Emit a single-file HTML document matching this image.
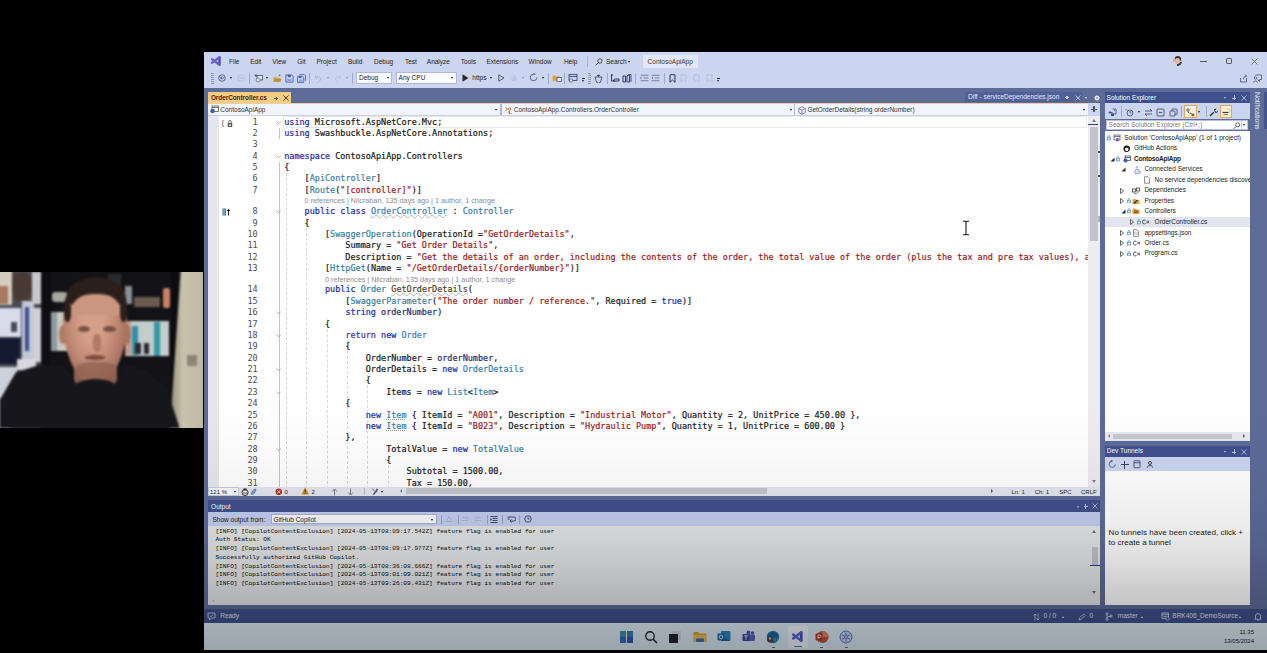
<!DOCTYPE html>
<html lang="en">
<head>
<meta charset="utf-8">
<title>OrderController.cs - ContosoApiApp - Visual Studio</title>
<style>
*{box-sizing:border-box;margin:0;padding:0}
html,body{width:1267px;height:653px;overflow:hidden;background:#000}
body{position:relative;font-family:"Liberation Sans",sans-serif;font-size:6.4px;color:#1e1e1e;line-height:1}
#vs{position:absolute;left:204px;top:52px;width:1063px;height:597.8px;background:#5d6b99;overflow:hidden}
#vs *{position:absolute;white-space:nowrap}
#vs span span,#vs pre span{position:static}
#cmd{left:0;top:0;width:1063px;height:36px;background:#ccd5f0}
.m{top:6.7px;font-size:6.5px;color:#222}
.t{font-size:6.5px;color:#222}
.car{width:0;height:0;border-left:1.7px solid transparent;border-right:1.7px solid transparent;border-top:2.2px solid #222}
.sep{width:1px;height:11px;top:20.5px;background:#9ea9cf}
.grip{width:3px;height:11px;top:20.5px;background:repeating-linear-gradient(#8d97bd 0 1px,transparent 1px 2px)}
.combo{top:20px;height:11.5px;background:#fbfcff;border:1px solid #aeb8dc}
#tab{left:4px;top:39.5px;width:83px;height:12px;background:#f5cc84}
#nav{left:4px;top:51px;width:884px;height:12.6px;background:#f3f5fc;border-top:1px solid #d4daf0;border-bottom:1px solid #c9cfe6}
#ed{left:4px;top:63.6px;width:884px;height:371px;background:#fff;overflow:hidden}
#edbar{left:4px;top:434.6px;width:892px;height:9.2px;background:#e4e6ef}
.tabt{font-size:6.4px;font-weight:bold;color:#4a1c08;letter-spacing:-0.03px}
#mg{left:0;top:0;width:11px;height:372px;background:#e6e7ec}
.ln{left:15.6px;width:34px;text-align:right;font:8.475px/11.375px "DejaVu Sans Mono","Liberation Mono",monospace;color:#4c4c4c}
#vs .cd{white-space:pre;-webkit-text-stroke:0.2px;left:76.2px;font:8.475px/11.375px "DejaVu Sans Mono","Liberation Mono",monospace;color:#1a1a1a}
.cl{font-size:7.25px;color:#8c8c8c}
.k{color:#1c2ca8}.c{color:#4a2aa8}.ty{color:#3a80a6}.tu{color:#3a80a6;text-decoration:underline wavy #b4b4b4 0.3px;text-underline-offset:-0.4px}.s{color:#9a1c1c}.mu{color:#5a4420;text-decoration:underline wavy #b4b4b4 0.3px;text-underline-offset:-0.4px}.v{color:#1f2f6f}
.gd{width:0;border-left:1px dashed #d6d6d6}
.fl{width:1px;background:#c4c4c4}
.td{color:#3a80a6;text-decoration:underline dotted #999 0.6px}
#sb{left:883.6px;top:63.6px;width:12.4px;height:371px;background:#ececf1}
#sbt{left:886.3px;top:74.5px;width:7.4px;height:114.5px;background:#c4c5cb}
.wt{font-size:6.5px;color:#e4e8f6}
.sbtx{font-size:6px;color:#222;top:436.6px}
.sep2{width:1px;height:9px;top:462.5px;background:#98a3c8}
#out{left:4px;top:473.6px;width:881px;height:79px;background:#e5e6e8}
#vs .ot{white-space:pre;font:6.15px/8.77px "Liberation Mono",monospace;color:#222;-webkit-text-stroke:0.05px}
#st{left:0;top:556.8px;width:1063px;height:14.2px;background:#40508d}
#tb{left:0;top:571px;width:1063px;height:26.8px;background:#dfeefa}
.cau{width:0;height:0;border-left:1.7px solid transparent;border-right:1.7px solid transparent;border-bottom:2.2px solid #dfe4f5}
.clk{right:13px;font-size:6px;color:#1a1f2a}
.sep3{width:1px;height:11px;top:54px;background:#9ea9cf}
.dt{font-size:8.05px;color:#222}
.nt{font-size:7px;letter-spacing:-0.05px;color:#e8ecf8;transform-origin:0 0;transform:rotate(90deg)}
#cam{position:absolute;left:0;top:272.4px;width:203px;height:155.2px;background:#121216;overflow:hidden}
#cam div{position:absolute}
#camb{left:0;top:0;width:203px;height:155.2px;filter:blur(1px)}
.mi{font:8px/11px "Liberation Sans",sans-serif;color:#555}
#shade{left:0;top:348px;width:1063px;height:250px;pointer-events:none;background:linear-gradient(rgba(0,0,0,0) 0,rgba(0,0,0,.02) 50px,rgba(0,0,0,.05) 100px,rgba(0,0,0,.08) 130px,rgba(0,0,0,.13) 160px,rgba(0,0,0,.20) 190px,rgba(0,0,0,.25) 215px,rgba(0,0,0,.31) 250px)}
.curline{width:804px;height:11.8px;border:1px solid #e9e9ec}
</style>
</head>
<body>
<div id="cam"><div id="camb">
<div style="left:-2.8px;top:-4.1px;width:44.1px;height:162.6px;background:#4a4a54;"></div>
<div style="left:-2.8px;top:-4.1px;width:15.2px;height:37.2px;background:#d4cdbf;"></div>
<div style="left:-2.8px;top:13.8px;width:11.0px;height:17.9px;background:#a87860;"></div>
<div style="left:12.4px;top:0.0px;width:19.3px;height:28.9px;background:#4a3a34;border-radius:40%"></div>
<div style="left:31.7px;top:0.0px;width:9.6px;height:31.7px;background:#c8c8cc;"></div>
<div style="left:-2.8px;top:35.8px;width:24.2px;height:28.4px;background:#d8dce8;"></div>
<div style="left:11.0px;top:49.6px;width:6.1px;height:9.6px;background:#4a4a58;"></div>
<div style="left:-2.8px;top:65.3px;width:22.6px;height:26.5px;background:#141b30;"></div>
<div style="left:-2.8px;top:94.5px;width:19.8px;height:30.9px;background:#ccd0da;"></div>
<div style="left:21.5px;top:28.9px;width:12.1px;height:63.4px;background:#c1c8d8;"></div>
<div style="left:24.8px;top:34.4px;width:3.9px;height:44.1px;background:#3a4f90;"></div>
<div style="left:33.1px;top:35.8px;width:8.3px;height:53.7px;background:#d0d0d4;"></div>
<div style="left:16.5px;top:86.8px;width:19.3px;height:11.0px;background:#d8d8dc;"></div>
<div style="left:-2.8px;top:125.4px;width:13.8px;height:33.1px;background:#9098a8;"></div>
<div style="left:41.3px;top:-4.1px;width:9.6px;height:162.6px;background:#0e0e12;"></div>
<div style="left:51.0px;top:-4.1px;width:125.4px;height:162.6px;background:#131317;"></div>
<div style="left:52.4px;top:19.3px;width:15.2px;height:10.2px;background:#a8a8a0;border-radius:30%"></div>
<div style="left:51.0px;top:40.0px;width:16.5px;height:38.6px;background:#c9c8c0;"></div>
<div style="left:51.0px;top:40.0px;width:5.5px;height:38.6px;background:#8f9aa0;"></div>
<div style="left:107.5px;top:1.4px;width:13.8px;height:16.5px;background:#2a2a30;"></div>
<div style="left:125.4px;top:13.8px;width:6.9px;height:17.9px;background:#8a9098;"></div>
<div style="left:133.6px;top:24.8px;width:26.2px;height:10.2px;background:#6a5a50;"></div>
<div style="left:162.6px;top:15.2px;width:7.7px;height:20.9px;background:#c98266;border-radius:20%"></div>
<div style="left:125.4px;top:48.8px;width:44.1px;height:35.3px;background:#c4cccc;"></div>
<div style="left:125.4px;top:48.8px;width:5.5px;height:33.9px;background:#c89888;"></div>
<div style="left:132.3px;top:53.7px;width:5.5px;height:28.9px;background:#2f8fa8;"></div>
<div style="left:154.3px;top:49.6px;width:5.5px;height:34.4px;background:#2f9aa8;"></div>
<div style="left:135.0px;top:70.3px;width:5.5px;height:11.0px;background:#2a2a30;"></div>
<div style="left:143.8px;top:70.3px;width:5.5px;height:11.0px;background:#2a2a30;"></div>
<div style="left:170.8px;top:-4.1px;width:12.4px;height:162.6px;background:#0c0c10;"></div>
<div style="left:168.6px;top:-4.1px;width:40.8px;height:162.6px;background:linear-gradient(90deg,#8f8974,#c9c2ad 35%,#bcb59f);clip-path:polygon(30% 0,100% 0,100% 100%,3% 100%)"></div>
<div style="left:187.4px;top:82.7px;width:9.6px;height:11.0px;background:#8c8478;"></div>
<div style="left:0;top:0;width:203px;height:156px;background:#16161b;clip-path:polygon(-1.4px 129.5px,15.7px 100.0px,41.3px 91.8px,65.0px 95.6px,72.2px 103.3px,82.7px 113.0px,110.2px 113.0px,118.5px 103.3px,122.3px 92.3px,146.0px 98.4px,166.4px 114.9px,179.1px 153.8px,179.1px 164.0px,-1.4px 164.0px)"></div>
<div style="left:73.8px;top:81.3px;width:43.3px;height:33.6px;background:#8f6050;border-radius:25%"></div>
<div style="left:59.0px;top:52.4px;width:8.3px;height:19.3px;background:#b07c68;border-radius:45%"></div>
<div style="left:123.4px;top:52.4px;width:7.2px;height:19.3px;background:#a87462;border-radius:45%"></div>
<div style="left:63.4px;top:15.2px;width:63.9px;height:94.2px;background:radial-gradient(ellipse at 46% 36%,#d5a08a 0 22%,#c28a74 48%,#a5705e 72%,#805246 100%);border-radius:44% 44% 46% 46%/34% 34% 66% 66%"></div>
<div style="left:65.6px;top:4.7px;width:60.6px;height:28.4px;background:#2b1f1b;border-radius:50% 50% 20% 20%/80% 80% 20% 20%"></div>
<div style="left:63.9px;top:24.8px;width:7.2px;height:24.8px;background:#2b1f1b;border-radius:40%"></div>
<div style="left:120.1px;top:24.8px;width:7.2px;height:24.8px;background:#2b1f1b;border-radius:40%"></div>
<div style="left:72.2px;top:21.8px;width:47.9px;height:20.9px;background:#ca967f;border-radius:45% 45% 0 0/70% 70% 0 0"></div>
<div style="left:78.0px;top:53.2px;width:11.6px;height:6.6px;background:#7a5246;border-radius:50%"></div>
<div style="left:102.8px;top:53.2px;width:13.0px;height:6.6px;background:#7a5246;border-radius:50%"></div>
<div style="left:93.1px;top:62.0px;width:7.7px;height:17.9px;background:#b07a66;border-radius:40%"></div>
<div style="left:85.4px;top:82.7px;width:19.3px;height:4.7px;background:#86463f;border-radius:50%"></div>
<div style="left:75.8px;top:90.1px;width:41.3px;height:17.6px;background:#8f6050;border-radius:35% 35% 50% 50%;opacity:.75"></div>
<div style="left:72.2px;top:106.6px;width:46.8px;height:24.2px;background:#16161b;border-radius:50% 50% 0 0/45% 45% 0 0"></div>
</div></div>
<div id="vs">
<div id="cmd">
<svg style="left:6.3px;top:3px" width="12.5" height="12" viewBox="0 0 25 24"><path d="M4 8.500 16 17.500M4 15.500 16 6.500" fill="none" stroke="#6f5fd0" stroke-width="4.600" stroke-linecap="round"/><path d="M19 4.500v15" stroke="#5a49c0" stroke-width="5" stroke-linecap="round"/><path d="M16 6.500 19 4.500M16 17.500l3 2" stroke="#6f5fd0" stroke-width="4" stroke-linecap="round"/></svg>
<span class="m" style="left:25.0px">File</span>
<span class="m" style="left:46.2px">Edit</span>
<span class="m" style="left:68.3px">View</span>
<span class="m" style="left:93.2px">Git</span>
<span class="m" style="left:112.5px">Project</span>
<span class="m" style="left:143.9px">Build</span>
<span class="m" style="left:170.0px">Debug</span>
<span class="m" style="left:201.0px">Test</span>
<span class="m" style="left:222.8px">Analyze</span>
<span class="m" style="left:256.8px">Tools</span>
<span class="m" style="left:282.5px">Extensions</span>
<span class="m" style="left:324.6px">Window</span>
<span class="m" style="left:359.9px">Help</span>
<i style="left:383px;top:4px;width:1px;height:11px;background:#aab3d4"></i>
<svg style="left:391px;top:5.5px" width="8" height="8" viewBox="0 0 16 16"><circle cx="10" cy="6" r="4.3" fill="none" stroke="#333" stroke-width="1.6"/><path d="M7 9 1.5 14.5" stroke="#333" stroke-width="1.8"/></svg>
<span class="m" style="left:402px">Search</span><i class="car" style="left:424px;top:9px"></i>
<div style="left:439px;top:2.7px;width:55px;height:13px;background:#e1e7f8"></div><span class="m" style="left:443.6px;color:#3a3a3a">ContosoApiApp</span>
<div style="left:968.8px;top:3.8px;width:9.6px;height:10.6px;border-radius:50%;overflow:hidden;background:#b9bcc4"><div style="left:0;top:6.5px;width:5px;height:5px;background:#d8d8da"></div><div style="left:4.5px;top:6px;width:6px;height:5px;background:#2a3248"></div><div style="left:1.8px;top:0.3px;width:6.4px;height:4.5px;border-radius:50% 50% 30% 30%;background:#2a2630"></div><div style="left:2.6px;top:2.6px;width:4.6px;height:5.4px;border-radius:45%;background:#e6b4a4"></div></div>
<i style="left:996.3px;top:9px;width:6.4px;height:0.9px;background:#555"></i>
<i style="left:1022px;top:6.3px;width:5.8px;height:5.8px;border:0.8px solid #555;border-radius:1.2px"></i>
<svg style="left:1047px;top:6px" width="7" height="7" viewBox="0 0 7 7"><path d="M0.5 0.5 6.5 6.5M6.5 0.5 0.5 6.5" stroke="#555" stroke-width="0.75"/></svg>
<svg style="left:1035px;top:22px" width="9" height="9" viewBox="0 0 18 18"><path d="M3 8v8h12V8M9 11C9 6 11 4 15 4M12 1l3 3-3 3" fill="none" stroke="#44507a" stroke-width="1.6"/></svg>
<svg style="left:1049px;top:22px" width="9" height="9" viewBox="0 0 18 18"><path d="M5 2h12v9h-4v4l-4-4" fill="none" stroke="#44507a" stroke-width="1.6"/><circle cx="5" cy="8" r="2.5" fill="none" stroke="#44507a" stroke-width="1.6"/><path d="M1 17c0-4 8-4 8 0" fill="none" stroke="#44507a" stroke-width="1.6"/></svg>
<i class="grip" style="left:7.0px"></i>
<svg style="left:13.7px;top:21.8px" width="8" height="8" viewBox="0 0 16 16"><circle cx="8" cy="8" r="6.5" fill="none" stroke="#3b4a86" stroke-width="1.6"/><path d="M12 8H5M8 5 5 8l3 3" fill="none" stroke="#3b4a86" stroke-width="1.6"/></svg>
<i class="car" style="left:26.0px;top:25px"></i>
<svg style="left:32.6px;top:21.8px" width="8" height="8" viewBox="0 0 16 16"><circle cx="8" cy="8" r="6.5" fill="none" stroke="#b3bcd9" stroke-width="1.6"/><path d="M4 8h7M8 5l3 3-3 3" fill="none" stroke="#b3bcd9" stroke-width="1.6"/></svg>
<i class="sep" style="left:45.3px"></i>
<svg style="left:50.0px;top:21px" width="10" height="10" viewBox="0 0 20 20"><rect x="6" y="5" width="11" height="9" fill="#dfe4f5" stroke="#3b4a86" stroke-width="1.6"/><path d="M4 2v6M1 5h6" stroke="#444" stroke-width="1.5"/><circle cx="8" cy="14" r="4" fill="#eef" stroke="#555" stroke-width="1.3"/></svg>
<i class="car" style="left:62.0px;top:25px"></i>
<svg style="left:68.5px;top:21.5px" width="9" height="9" viewBox="0 0 20 20"><path d="M1 17V7h6l2 2h8v8z" fill="#d9a441"/><path d="M12 5l4-3M14 2h2v2" stroke="#555" stroke-width="1.4" fill="none"/><path d="M1 17l3-6h15l-3 6z" fill="#c48d2c"/></svg>
<svg style="left:81px;top:21.5px" width="9" height="9" viewBox="0 0 20 20"><path d="M2 2h13l3 3v13H2z" fill="none" stroke="#4a63ad" stroke-width="2"/><rect x="6" y="2" width="7" height="5" fill="#3f59a8"/><rect x="5" y="11" width="10" height="7" fill="#8ea2dc"/></svg>
<svg style="left:92.5px;top:21.5px" width="9" height="9" viewBox="0 0 20 20"><path d="M5 1h11l3 3v11" fill="none" stroke="#3f59a8" stroke-width="1.8"/><path d="M1 5h11l3 3v11H1z" fill="none" stroke="#3f59a8" stroke-width="1.8"/><rect x="4" y="12" width="8" height="6" fill="#8ea2dc"/><rect x="4" y="5" width="6" height="4" fill="#3f59a8"/></svg>
<i class="sep" style="left:105.4px"></i>
<svg style="left:110.0px;top:21.5px" width="8" height="9" viewBox="0 0 16 18"><path d="M3 2v6h6M3 8c3-5 10-4 10 2 0 3-2 5-6 7" fill="none" stroke="#a9b2d2" stroke-width="1.7"/></svg>
<i class="car" style="left:122.5px;top:25px;border-top-color:#8f99bd"></i>
<svg style="left:130.0px;top:21.5px" width="8" height="9" viewBox="0 0 16 18"><path d="M13 2v6H7M13 8C10 3 3 4 3 10c0 3 2 5 6 7" fill="none" stroke="#b9c1dc" stroke-width="1.7"/></svg>
<i class="car" style="left:142.0px;top:25px;border-top-color:#8f99bd"></i>
<i class="sep" style="left:148.4px"></i>
<div class="combo" style="left:152.3px;width:36px"></div><span class="t" style="left:155.0px;top:22.5px">Debug</span><i class="car" style="left:182.5px;top:25px"></i>
<div class="combo" style="left:192.1px;width:61px"></div><span class="t" style="left:194.6px;top:22.5px">Any CPU</span><i class="car" style="left:247.3px;top:25px"></i>
<svg style="left:258.0px;top:21.8px" width="7" height="8" viewBox="0 0 7 8"><path d="M0.5 0.3 6.5 4 0.5 7.7z" fill="#2a2a2a"/></svg>
<span class="t" style="left:268.3px;top:22.5px">https</span><i class="car" style="left:286.3px;top:25px"></i>
<svg style="left:293.5px;top:21.8px" width="7" height="8" viewBox="0 0 7 8"><path d="M0.8 0.8 6 4 0.8 7.2z" fill="none" stroke="#3b4a86" stroke-width="0.9"/></svg>
<svg style="left:305.5px;top:21.3px" width="8" height="9" viewBox="0 0 16 18"><path d="M8 2c1 3 5 5 5 9a5 5 0 0 1-10 0c0-2 1-3 2-4 0 2 1 2 2 2 0-3 0-5 1-7z" fill="#bcc4df"/></svg>
<i class="car" style="left:317.5px;top:25px;border-top-color:#8f99bd"></i>
<svg style="left:325.0px;top:21.3px" width="9" height="9" viewBox="0 0 18 18"><path d="M9 2.5A6.5 6.5 0 1 0 15.5 9M9 2.5h4M9 2.5 11 0" fill="none" stroke="#3b4a86" stroke-width="1.6"/></svg>
<i class="car" style="left:337.5px;top:25px"></i>
<i class="sep" style="left:344.2px"></i>
<svg style="left:348.0px;top:21px" width="10" height="10" viewBox="0 0 20 20"><path d="M1 16V5h6l2 2h7v9z" fill="#d9a441"/><rect x="10" y="9" width="9" height="8" fill="#e8ecf8" stroke="#3b4a86" stroke-width="1.4"/></svg>
<i class="sep" style="left:360.4px"></i>
<svg style="left:364.0px;top:21px" width="10" height="10" viewBox="0 0 20 20"><rect x="2" y="3" width="16" height="12" fill="none" stroke="#3b4a86" stroke-width="1.8"/><path d="M2 7h16" stroke="#3b4a86" stroke-width="1.8"/><circle cx="6" cy="15" r="3.5" fill="#dfe4f5" stroke="#3b4a86" stroke-width="1.4"/></svg>
<i class="car" style="left:377.8px;top:28px"></i><i style="left:377.8px;top:26px;width:3.4px;height:1px;background:#222"></i>
<i class="grip" style="left:383.5px"></i>
<svg style="left:389.5px;top:21.5px" width="9" height="9" viewBox="0 0 18 18"><path d="M2 6h14l-2 7a4 4 0 0 1-10 0zM9 1v5M6 3h6" fill="none" stroke="#3d4566" stroke-width="1.7"/></svg>
<i class="sep" style="left:402.6px"></i>
<svg style="left:406.0px;top:21.5px" width="10" height="9" viewBox="0 0 20 18"><path d="M3 1v13h7M6 14h12v-4H9z" fill="none" stroke="#2f3a66" stroke-width="2"/><path d="M1 3l3-3 3 3z" fill="#2f3a66"/></svg>
<svg style="left:418.0px;top:21.5px" width="10" height="9" viewBox="0 0 20 18"><path d="M2 4v12h5V4zM10 4v12h5V2h-3z" fill="none" stroke="#2f3a66" stroke-width="2"/><path d="M13 1l5 0 0 15" fill="none" stroke="#2f3a66" stroke-width="1.6"/></svg>
<i class="sep" style="left:431.0px"></i>
<svg style="left:435.5px;top:22px" width="9" height="8" viewBox="0 0 18 16"><path d="M1 2.500h16M7 8h10M1 13.500h16" stroke="#5a6488" stroke-width="1.500"/><path d="M1 6l3 2-3 2z" fill="#4a5478"/></svg>
<svg style="left:447.0px;top:22px" width="9" height="8" viewBox="0 0 18 16"><path d="M1 2.500h16M7 8h10M1 13.500h16" stroke="#5a6488" stroke-width="1.500"/><path d="M4 6 1 8l3 2z" fill="#4a5478"/></svg>
<i class="sep" style="left:459.9px"></i>
<svg style="left:464.5px;top:21.5px" width="7" height="9" viewBox="0 0 14 18"><path d="M2 1.5h10v15l-5-4.5-5 4.5z" fill="none" stroke="#2f3552" stroke-width="2"/></svg>
<svg style="left:476.4px;top:21.5px" width="8" height="9" viewBox="0 0 16 18"><path d="M2 1.5h10v15l-5-4.5-5 4.5z" fill="none" stroke="#b4bcd9" stroke-width="1.8"/></svg>
<svg style="left:489.0px;top:21.5px" width="8" height="9" viewBox="0 0 16 18"><path d="M2 1.5h10v15l-5-4.5-5 4.5z" fill="none" stroke="#b4bcd9" stroke-width="1.8"/></svg>
<svg style="left:501.7px;top:21.5px" width="8" height="9" viewBox="0 0 16 18"><path d="M2 1.5h10v15l-5-4.5-5 4.5z" fill="none" stroke="#b4bcd9" stroke-width="1.8"/></svg>
<i class="car" style="left:513.0px;top:28px"></i><i style="left:513.0px;top:26px;width:3.4px;height:1px;background:#222"></i>
</div>
<div id="tab"></div>
<span class="tabt" style="left:6.9px;top:43.3px">OrderController.cs</span>
<i style="left:70px;top:46px;width:4px;height:1px;background:#6a4a20"></i><i style="left:71.5px;top:44.5px;width:1.5px;height:3.5px;background:#6a4a20"></i>
<svg style="left:78.5px;top:43.3px" width="6" height="6" viewBox="0 0 6 6"><path d="M0.5 0.5 5.5 5.5M5.5 0.5 0.5 5.5" stroke="#5a3a10" stroke-width="1"/></svg>
<div style="left:761px;top:39.7px;width:117px;height:10.3px;background:#4f609b"></div>
<span class="wt" style="left:764px;top:42px">Diff - serviceDependencies.json</span>
<i style="left:861px;top:45px;width:4px;height:1px;background:#c9d0ea"></i><i style="left:862.3px;top:43.5px;width:1.5px;height:3.5px;background:#c9d0ea"></i>
<svg style="left:870.5px;top:42.5px" width="6" height="6" viewBox="0 0 6 6"><path d="M0.5 0.5 5.5 5.5M5.5 0.5 0.5 5.5" stroke="#c9d0ea" stroke-width="0.9"/></svg>
<i class="car" style="left:881px;top:45px;border-top-color:#dfe4f5"></i>
<svg style="left:890px;top:42.5px" width="6" height="6" viewBox="0 0 14 14"><circle cx="7" cy="7" r="4" fill="none" stroke="#e6eaf8" stroke-width="3"/><path d="M7 0v14M0 7h14M2 2l10 10M12 2 2 12" stroke="#e6eaf8" stroke-width="1.6"/><circle cx="7" cy="7" r="1.8" fill="#5d6b99"/></svg>
<div id="nav"></div>
<i style="left:4px;top:50.6px;width:892px;height:0.8px;background:#f5cc84;opacity:.75"></i>
<svg style="left:6px;top:53px" width="9" height="9" viewBox="0 0 18 18"><rect x="4" y="2" width="13" height="11" fill="#f4f6fd" stroke="#555" stroke-width="1.6"/><path d="M4 5h13" stroke="#555" stroke-width="1.6"/><circle cx="5" cy="12" r="4.5" fill="#3d5fb5"/></svg>
<span class="t" style="left:16.3px;top:54.8px;color:#333">ContosoApiApp</span>
<i class="car" style="left:291.2px;top:57px"></i>
<i style="left:296px;top:52px;width:1.5px;height:11px;background:#aab5da"></i>
<svg style="left:300px;top:53.5px" width="9" height="9" viewBox="0 0 18 18"><path d="M3 3l4 3-4 3" fill="none" stroke="#b5541c" stroke-width="1.6"/><circle cx="11" cy="6" r="2.4" fill="none" stroke="#b5541c" stroke-width="1.5"/><path d="M11 9v6h4M11 12H7" fill="none" stroke="#b5541c" stroke-width="1.5"/></svg>
<span class="t" style="left:309.8px;top:54.8px;color:#333">ContosoApiApp.Controllers.OrderController</span>
<i class="car" style="left:585.5px;top:57px"></i>
<i style="left:589.5px;top:52px;width:1.5px;height:11px;background:#aab5da"></i>
<svg style="left:594px;top:53.5px" width="8" height="9" viewBox="0 0 16 18"><path d="M8 1.5 14.5 5v8L8 16.5 1.5 13V5zM1.5 5 8 8.5 14.5 5M8 8.5v8" fill="none" stroke="#6b4fb5" stroke-width="1.4"/></svg>
<span class="t" style="left:603.4px;top:54.8px;color:#333">GetOrderDetails(string orderNumber)</span>
<i class="car" style="left:878.5px;top:57px"></i>
<div style="left:884px;top:51px;width:12px;height:12.6px;background:#ccd5f0"></div>
<i style="left:887px;top:56.8px;width:6px;height:1.1px;background:#4a5478"></i><i style="left:889.45px;top:54.2px;width:1.1px;height:6.300px;background:#4a5478"></i>
<div id="ed">
<div id="mg"></div>
<i class="fl" style="left:70.6px;top:12.4px;height:11.4px"></i>
<i class="fl" style="left:70.6px;top:46.5px;height:327.1px"></i>
<svg class="fv" style="left:68.0px;top:5.0px" width="5.4" height="3.4" viewBox="0 0 5.4 3.4"><path d="M0.4 0.4 2.7 2.8 5 0.4" fill="none" stroke="#9a9a9a" stroke-width="0.8"/></svg>
<svg class="fv" style="left:68.0px;top:39.1px" width="5.4" height="3.4" viewBox="0 0 5.4 3.4"><path d="M0.4 0.4 2.7 2.8 5 0.4" fill="none" stroke="#9a9a9a" stroke-width="0.8"/></svg>
<svg class="fv" style="left:68.0px;top:94.6px" width="5.4" height="3.4" viewBox="0 0 5.4 3.4"><path d="M0.4 0.4 2.7 2.8 5 0.4" fill="none" stroke="#9a9a9a" stroke-width="0.8"/></svg>
<svg class="fv" style="left:68.0px;top:195.6px" width="5.4" height="3.4" viewBox="0 0 5.4 3.4"><path d="M0.4 0.4 2.7 2.8 5 0.4" fill="none" stroke="#9a9a9a" stroke-width="0.8"/></svg>
<svg class="fv" style="left:68.0px;top:218.4px" width="5.4" height="3.4" viewBox="0 0 5.4 3.4"><path d="M0.4 0.4 2.7 2.8 5 0.4" fill="none" stroke="#9a9a9a" stroke-width="0.8"/></svg>
<svg class="fv" style="left:68.0px;top:252.5px" width="5.4" height="3.4" viewBox="0 0 5.4 3.4"><path d="M0.4 0.4 2.7 2.8 5 0.4" fill="none" stroke="#9a9a9a" stroke-width="0.8"/></svg>
<svg class="fv" style="left:68.0px;top:275.2px" width="5.4" height="3.4" viewBox="0 0 5.4 3.4"><path d="M0.4 0.4 2.7 2.8 5 0.4" fill="none" stroke="#9a9a9a" stroke-width="0.8"/></svg>
<svg class="fv" style="left:68.0px;top:332.1px" width="5.4" height="3.4" viewBox="0 0 5.4 3.4"><path d="M0.4 0.4 2.7 2.8 5 0.4" fill="none" stroke="#9a9a9a" stroke-width="0.8"/></svg>
<i class="gd" style="left:98.2px;top:102.0px;height:271.6px"></i>
<i class="gd" style="left:118.6px;top:203.0px;height:170.6px"></i>
<i class="gd" style="left:139.0px;top:225.8px;height:147.9px"></i>
<i class="gd" style="left:159.4px;top:259.9px;height:113.8px"></i>
<i class="gd" style="left:179.8px;top:339.5px;height:34.1px"></i>
<i class="gd" style="left:77.8px;top:57.9px;height:315.8px"></i>
<span class="mi" style="left:13.5px;top:1.3px">(</span><svg style="left:18.5px;top:4.2px" width="6" height="7.5" viewBox="0 0 12 15"><rect x="1.5" y="6" width="9" height="8" fill="#555" /><rect x="4" y="8.500" width="4" height="3.500" fill="#ddd"/><path d="M3.500 6V3.500a2.500 2.500 0 0 1 5 0V6" fill="none" stroke="#444" stroke-width="1.500"/></svg>
<svg style="left:13.5px;top:92.4px" width="9" height="8" viewBox="0 0 18 16"><rect x="1" y="1" width="7" height="14" fill="#2f6f8f"/><path d="M2 4h5M2 8h5M2 12h5" stroke="#dfeaf0" stroke-width="1.500"/><path d="M13 15V3M10 6l3-3.500L16 6" fill="none" stroke="#222" stroke-width="2"/></svg>
<i class="curline" style="left:75.2px;top:0.7px"></i>
<span class="ln" style="top:1.0px">1</span><pre class="cd" style="top:1.0px"><span class="k">using</span> Microsoft.AspNetCore.Mvc;</pre>
<span class="ln" style="top:12.4px">2</span><pre class="cd" style="top:12.4px"><span class="k">using</span> Swashbuckle.AspNetCore.Annotations;</pre>
<span class="ln" style="top:23.8px">3</span>
<span class="ln" style="top:35.1px">4</span><pre class="cd" style="top:35.1px"><span class="k">namespace</span> ContosoApiApp.Controllers</pre>
<span class="ln" style="top:46.5px">5</span><pre class="cd" style="top:46.5px">{</pre>
<span class="ln" style="top:57.9px">6</span><pre class="cd" style="top:57.9px">    [<span class="ty">ApiController</span>]</pre>
<span class="ln" style="top:69.2px">7</span><pre class="cd" style="top:69.2px">    [<span class="ty">Route</span>(<span class="s">"[controller]"</span>)]</pre>
<span class="cl" style="left:96.6px;top:81.8px">0 references | Nilcraban, 135 days ago | 1 author, 1 change</span>
<span class="ln" style="top:90.6px">8</span><pre class="cd" style="top:90.6px">    <span class="k">public</span> <span class="k">class</span> <span class="tu">OrderController</span> : <span class="ty">Controller</span></pre>
<span class="ln" style="top:102.0px">9</span><pre class="cd" style="top:102.0px">    {</pre>
<span class="ln" style="top:113.4px">10</span><pre class="cd" style="top:113.4px">        [<span class="ty">SwaggerOperation</span>(OperationId =<span class="s">"GetOrderDetails"</span>,</pre>
<span class="ln" style="top:124.8px">11</span><pre class="cd" style="top:124.8px">            Summary = <span class="s">"Get Order Details"</span>,</pre>
<span class="ln" style="top:136.1px">12</span><pre class="cd" style="top:136.1px">            Description = <span class="s">"Get the details of an order, including the contents of the order, the total value of the order (plus the tax and pre tax values), and the status of the order."</span></pre>
<span class="ln" style="top:147.5px">13</span><pre class="cd" style="top:147.5px">        [<span class="ty">HttpGet</span>(Name = <span class="s">"/GetOrderDetails/{orderNumber}"</span>)]</pre>
<span class="cl" style="left:117.0px;top:160.1px">0 references | Nilcraban, 135 days ago | 1 author, 1 change</span>
<span class="ln" style="top:168.9px">14</span><pre class="cd" style="top:168.9px">        <span class="k">public</span> <span class="ty">Order</span> <span class="mu">GetOrderDetails</span>(</pre>
<span class="ln" style="top:180.2px">15</span><pre class="cd" style="top:180.2px">            [<span class="ty">SwaggerParameter</span>(<span class="s">"The order number / reference."</span>, Required = <span class="k">true</span>)]</pre>
<span class="ln" style="top:191.6px">16</span><pre class="cd" style="top:191.6px">            <span class="k">string</span> <span class="v">orderNumber</span>)</pre>
<span class="ln" style="top:203.0px">17</span><pre class="cd" style="top:203.0px">        {</pre>
<span class="ln" style="top:214.4px">18</span><pre class="cd" style="top:214.4px">            <span class="c">return</span> <span class="k">new</span> <span class="ty">Order</span></pre>
<span class="ln" style="top:225.8px">19</span><pre class="cd" style="top:225.8px">            {</pre>
<span class="ln" style="top:237.1px">20</span><pre class="cd" style="top:237.1px">                OrderNumber = <span class="v">orderNumber</span>,</pre>
<span class="ln" style="top:248.5px">21</span><pre class="cd" style="top:248.5px">                OrderDetails = <span class="k">new</span> <span class="ty">OrderDetails</span></pre>
<span class="ln" style="top:259.9px">22</span><pre class="cd" style="top:259.9px">                {</pre>
<span class="ln" style="top:271.2px">23</span><pre class="cd" style="top:271.2px">                    Items = <span class="k">new</span> <span class="ty">List</span>&lt;<span class="ty">Item</span>&gt;</pre>
<span class="ln" style="top:282.6px">24</span><pre class="cd" style="top:282.6px">            {</pre>
<span class="ln" style="top:294.0px">25</span><pre class="cd" style="top:294.0px">                <span class="k">new</span> <span class="td">Item</span> { ItemId = <span class="s">"A001"</span>, Description = <span class="s">"Industrial Motor"</span>, Quantity = 2, UnitPrice = 450.00 },</pre>
<span class="ln" style="top:305.4px">26</span><pre class="cd" style="top:305.4px">                <span class="k">new</span> <span class="td">Item</span> { ItemId = <span class="s">"B023"</span>, Description = <span class="s">"Hydraulic Pump"</span>, Quantity = 1, UnitPrice = 600.00 }</pre>
<span class="ln" style="top:316.8px">27</span><pre class="cd" style="top:316.8px">            },</pre>
<span class="ln" style="top:328.1px">28</span><pre class="cd" style="top:328.1px">                    TotalValue = <span class="k">new</span> <span class="ty">TotalValue</span></pre>
<span class="ln" style="top:339.5px">29</span><pre class="cd" style="top:339.5px">                    {</pre>
<span class="ln" style="top:350.9px">30</span><pre class="cd" style="top:350.9px">                        Subtotal = 1500.00,</pre>
<span class="ln" style="top:362.2px">31</span><pre class="cd" style="top:362.2px">                        Tax = 150.00,</pre>
<!--EDX-->
</div>
<div id="sb"></div><div id="sbt"></div>
<i style="left:887.5px;top:67px;width:0;height:0;border-left:2.5px solid transparent;border-right:2.5px solid transparent;border-bottom:3px solid #7d8088"></i>
<i style="left:887.5px;top:427.5px;width:0;height:0;border-left:2.5px solid transparent;border-right:2.5px solid transparent;border-top:3px solid #7d8088"></i>
<i style="left:884px;top:72.2px;width:10px;height:1px;background:#2a3a9a"></i>
<i style="left:894px;top:99.3px;width:2px;height:2px;background:#2f5f6f"></i><i style="left:894px;top:123px;width:2px;height:2px;background:#2f5f6f"></i><i style="left:894px;top:164px;width:2px;height:6px;background:#b4b6be"></i>
<div id="edbar"></div>
<div style="left:4px;top:434.6px;width:30.5px;height:9.2px;background:#f8f9fd;border:1px solid #c5cbe3"></div>
<span class="sbtx" style="left:6px">121 %</span><i class="car" style="left:29.6px;top:438.6px"></i>
<svg style="left:36.5px;top:435.5px" width="8" height="8" viewBox="0 0 16 16"><circle cx="8" cy="9" r="6" fill="#fff" stroke="#2a2a2a" stroke-width="2"/><rect x="5" y="1" width="6" height="4" fill="#2a2a2a"/><path d="M4 10h8" stroke="#2a2a2a" stroke-width="1.6"/></svg>
<svg style="left:46px;top:435.5px" width="8" height="8" viewBox="0 0 16 16"><path d="M3 13c0-6 3-10 9-11-1 6-3 10-9 11z" fill="#7f9fdc" stroke="#3b5cb0" stroke-width="1.2"/></svg>
<svg style="left:70.5px;top:435.6px" width="7.6" height="7.6" viewBox="0 0 16 16"><circle cx="8" cy="8" r="7" fill="#c2301c"/><path d="M5 5l6 6M11 5l-6 6" stroke="#fff" stroke-width="1.8"/></svg>
<span class="sbtx" style="left:80.5px">0</span>
<svg style="left:96.5px;top:435.3px" width="8.4" height="7.8" viewBox="0 0 16 15"><path d="M8 0.5 15.5 14.5H0.5z" fill="#d08a1c"/><path d="M8 5v5M8 11.3v1.6" stroke="#2a1a00" stroke-width="1.7"/></svg>
<span class="sbtx" style="left:107.5px">2</span>
<svg style="left:127px;top:435.5px" width="7" height="8" viewBox="0 0 14 16"><path d="M7 15V2M2 7l5-5 5 5" fill="none" stroke="#555d7a" stroke-width="1.5"/></svg>
<svg style="left:143px;top:435.5px" width="7" height="8" viewBox="0 0 14 16"><path d="M7 1v13M2 9l5 5 5-5" fill="none" stroke="#555d7a" stroke-width="1.5"/></svg>
<i style="left:159.5px;top:435.5px;width:1px;height:7.5px;background:#b4bad2"></i>
<svg style="left:166.5px;top:435.3px" width="9" height="8.4" viewBox="0 0 18 17"><path d="M3 15 11 5l3 2-8 9zM12 2l1 2 2 1-2 1-1 2-1-2-2-1 2-1z" fill="#555d7a"/><path d="M2 3l6 6" stroke="#3b4566" stroke-width="1.5"/></svg>
<i class="car" style="left:176.5px;top:438.6px"></i>
<i style="left:195.5px;top:436.8px;width:0;height:0;border-top:2.3px solid transparent;border-bottom:2.3px solid transparent;border-right:2.8px solid #7d8088"></i>
<div style="left:202px;top:436.2px;width:361px;height:5.6px;background:#c3c6d0"></div>
<i style="left:787px;top:436.8px;width:0;height:0;border-top:2.3px solid transparent;border-bottom:2.3px solid transparent;border-left:2.8px solid #555"></i>
<span class="sbtx" style="left:807.5px">Ln: 1</span>
<span class="sbtx" style="left:830.7px">Ch: 1</span>
<span class="sbtx" style="left:855.3px">SPC</span>
<span class="sbtx" style="left:877px">CRLF</span>
<svg style="left:757.5px;top:168px" width="8" height="16" viewBox="0 0 8 16"><path d="M1 1.200h2.200L4 2l.8-.8H7M1 14.800h2.200L4 14l.8.800H7M4 2v12" fill="none" stroke="#fff" stroke-width="2.200"/><path d="M1 1.200h2.200L4 2l.8-.8H7M1 14.800h2.200L4 14l.8.800H7M4 2v12" fill="none" stroke="#1a1a1a" stroke-width="1.100"/></svg>
<div style="left:4px;top:448.4px;width:892px;height:11.2px;background:#40508d"></div>
<span class="wt" style="left:7.1px;top:451.6px;color:#fff">Output</span>
<i class="car" style="left:872.5px;top:453.5px;border-top-color:#b9c3e5"></i>
<i style="left:880px;top:454.3px;width:4px;height:0.8px;background:#b4bfe2"></i><i style="left:881.3px;top:451.5px;width:1.2px;height:5px;background:#b4bfe2"></i>
<svg style="left:887.5px;top:451.3px" width="6" height="6" viewBox="0 0 6 6"><path d="M0.5 0.5 5.5 5.5M5.5 0.5 0.5 5.5" stroke="#cdd5ef" stroke-width="0.75"/></svg>
<div style="left:4px;top:459.6px;width:892px;height:14px;background:#c3cdef"></div>
<span class="t" style="left:8.5px;top:464.5px">Show output from:</span>
<div style="left:66.8px;top:462.3px;width:166.5px;height:10px;background:#fbfcff;border:1px solid #aab3d0"></div>
<span class="t" style="left:69.6px;top:464.5px">GitHub Copilot</span>
<i class="car" style="left:227.2px;top:466.5px"></i>
<i class="sep2" style="left:237.3px"></i>
<svg style="left:241px;top:463px" width="8" height="8" viewBox="0 0 16 16"><path d="M2 13h12M4 10l4-7 4 7" fill="none" stroke="#a3acc9" stroke-width="1.5"/></svg>
<i class="sep2" style="left:253.5px"></i>
<svg style="left:257px;top:463px" width="8" height="8" viewBox="0 0 16 16"><path d="M2 5h9M2 11h12M11 2l3 3-3 3" fill="none" stroke="#a3acc9" stroke-width="1.5"/></svg>
<svg style="left:269.5px;top:463px" width="8" height="8" viewBox="0 0 16 16"><path d="M5 5h9M2 11h12M5 2 2 5l3 3" fill="none" stroke="#a3acc9" stroke-width="1.5"/></svg>
<i class="sep2" style="left:282.7px"></i>
<svg style="left:286px;top:463px" width="8" height="8" viewBox="0 0 16 16"><path d="M1 3h14M5 7h10M5 11h10M1 15h14" stroke="#2f3552" stroke-width="1.7"/><path d="M1 6l3 3-3 3z" fill="#2f3552"/></svg>
<i class="sep2" style="left:298.4px"></i>
<svg style="left:302.5px;top:463px" width="9" height="8" viewBox="0 0 18 16"><path d="M1 4h13a3 3 0 0 1 0 8H6M9 9l-3 3 3 3M1 8h5" fill="none" stroke="#2f3552" stroke-width="1.7"/></svg>
<i class="sep2" style="left:315.4px"></i>
<svg style="left:320px;top:463px" width="8" height="8" viewBox="0 0 16 16"><circle cx="8" cy="8" r="6.5" fill="none" stroke="#2f3552" stroke-width="1.6"/><path d="M8 4v4h3" fill="none" stroke="#2f3552" stroke-width="1.5"/></svg>
<div id="out"></div>
<pre class="ot" style="left:11.4px;top:475.6px">[INFO] [CopilotContentExclusion] [2024-05-13T08:09:17.542Z] feature flag is enabled for user
Auth Status: OK
[INFO] [CopilotContentExclusion] [2024-05-13T08:09:17.977Z] feature flag is enabled for user
Successfully authorized GitHub Copilot.
[INFO] [CopilotContentExclusion] [2024-05-13T08:36:08.666Z] feature flag is enabled for user
[INFO] [CopilotContentExclusion] [2024-05-13T09:01:09.021Z] feature flag is enabled for user
[INFO] [CopilotContentExclusion] [2024-05-13T09:26:09.431Z] feature flag is enabled for user</pre>
<div style="left:885px;top:473.6px;width:11px;height:79px;background:#e5e6e8"></div>
<i style="left:888px;top:477.5px;width:0;height:0;border-left:2.5px solid transparent;border-right:2.5px solid transparent;border-bottom:3px solid #6d7078"></i>
<i style="left:888px;top:538.5px;width:0;height:0;border-left:2.5px solid transparent;border-bottom:none;border-right:2.5px solid transparent;border-top:3px solid #6d7078"></i>
<div style="left:887.5px;top:494.5px;width:6px;height:18px;background:#bfc1c9"></div>
<i style="left:885.5px;top:512.8px;width:10px;height:1px;background:#2a3a9a"></i>
<i style="left:8px;top:548px;width:0;height:0;border-top:1.6px solid transparent;border-bottom:1.6px solid transparent;border-right:2px solid #aaa"></i>
<div style="left:901.0px;top:39.8px;width:145px;height:11.6px;background:#40508d"></div>
<span class="wt" style="left:902.6px;top:42.9px;color:#fff">Solution Explorer</span>
<i class="car" style="left:1019.7px;top:45.2px;border-top-color:#b9c3e5"></i>
<i style="left:1028.4px;top:46.3px;width:4px;height:0.8px;background:#b4bfe2"></i><i style="left:1029.7px;top:43.3px;width:1.2px;height:5px;background:#b4bfe2"></i>
<svg style="left:1036.8px;top:43.2px" width="6" height="6" viewBox="0 0 6 6"><path d="M0.5 0.5 5.5 5.5M5.5 0.5 0.5 5.5" stroke="#cdd5ef" stroke-width="0.75"/></svg>
<div style="left:901.0px;top:51.4px;width:145px;height:16px;background:#ccd5f0"></div>
<svg style="left:903.5px;top:55.7px" width="9" height="9" viewBox="0 0 18 18"><path d="M9 2h7v10H9M12 5h2" fill="none" stroke="#3b4a86" stroke-width="1.6"/><path d="M9 9H2M5 6 2 9l3 3" fill="none" stroke="#3b4a86" stroke-width="1.8"/><rect x="6" y="11" width="6" height="5" fill="#3b4a86"/></svg>
<i class="sep3" style="left:917.0px"></i>
<svg style="left:921.0px;top:55.7px" width="9" height="9" viewBox="0 0 18 18"><circle cx="10" cy="10" r="6" fill="none" stroke="#3d4566" stroke-width="1.6"/><path d="M10 6v4h3M1 2l3 3" fill="none" stroke="#3d4566" stroke-width="1.5"/></svg>
<i class="car" style="left:934.0px;top:59.3px"></i>
<svg style="left:939.5px;top:55.7px" width="9" height="9" viewBox="0 0 18 18"><path d="M2 6h14M12 2l4 4M16 12H2M6 16l-4-4" fill="none" stroke="#3d4566" stroke-width="1.6"/></svg>
<svg style="left:952.3px;top:55.7px" width="9" height="9" viewBox="0 0 18 18"><rect x="2" y="2" width="14" height="14" rx="1.5" fill="none" stroke="#3d4566" stroke-width="1.7"/><path d="M5.5 9h7" stroke="#3d4566" stroke-width="1.7"/></svg>
<svg style="left:964.5px;top:55.7px" width="9" height="9" viewBox="0 0 18 18"><rect x="6" y="2" width="10" height="11" rx="1" fill="none" stroke="#3d4566" stroke-width="1.6"/><rect x="2" y="6" width="10" height="10" rx="1" fill="#ccd5f0" stroke="#3d4566" stroke-width="1.6"/></svg>
<i class="sep3" style="left:976.6px"></i>
<div style="left:980.3px;top:53.2px;width:12.7px;height:12.7px;background:#fbeedb;border:0.8px solid #e2a862"></div>
<svg style="left:982.2px;top:55.7px" width="9" height="9" viewBox="0 0 18 18"><circle cx="4" cy="4" r="2.3" fill="none" stroke="#3d3d3d" stroke-width="1.5"/><circle cx="14" cy="14" r="2.3" fill="#c8841c" stroke="#3d3d3d" stroke-width="1.2"/><path d="M4 6.500c0 6 6 2 8 6" fill="none" stroke="#3d3d3d" stroke-width="1.5"/></svg>
<i class="car" style="left:994.3px;top:59.3px"></i>
<i class="sep3" style="left:1002.0px"></i>
<svg style="left:1004.5px;top:55.7px" width="9" height="9" viewBox="0 0 18 18"><path d="M2 16 9.500 8.500" stroke="#2a2a2a" stroke-width="2.600"/><path d="M10 3a4 4 0 0 1 5-1l-3 3 1 2 2 1 3-3a4 4 0 0 1-6 4z" fill="#2a2a2a"/></svg>
<div style="left:1015.7px;top:53.2px;width:12.3px;height:12.7px;background:#fbeedb;border:0.8px solid #e2a862"></div>
<svg style="left:1017.5px;top:55.7px" width="9" height="9" viewBox="0 0 18 18"><path d="M1 9h12" stroke="#3d3d3d" stroke-width="2.400"/><path d="M3 13h9" stroke="#c8841c" stroke-width="2"/><path d="M13 4l2-2M15 6h2M12 3V1" stroke="#c8841c" stroke-width="1.3"/></svg>
<div style="left:902.4px;top:68.0px;width:141.8px;height:10.3px;background:#fff;border:1px solid #b9c1dc"></div>
<span class="t" style="left:904.6px;top:70.2px;color:#7a7a7a">Search Solution Explorer (Ctrl+;)</span>
<svg style="left:1029.0px;top:69.5px" width="7.5" height="7.5" viewBox="0 0 16 16"><circle cx="10" cy="6" r="4.300" fill="none" stroke="#333" stroke-width="1.600"/><path d="M7 9 1.500 14.500" stroke="#333" stroke-width="1.800"/></svg>
<i style="left:1036.8px;top:69.0px;width:1px;height:8.3px;background:#c9cfe6"></i><i class="car" style="left:1038.6px;top:72.3px"></i>
<div style="left:901.0px;top:78.6px;width:145px;height:301.2px;background:#fff;overflow:hidden" id="tree">
<div style="left:0;top:86.4px;width:145px;height:10.500px;background:#e3e5ee"></div>
<svg style="left:2.3px;top:4.6px" width="4" height="5.400" viewBox="0 0 9 12"><rect x="1" y="5" width="7" height="6" fill="#e4eef6" stroke="#4d8fb8" stroke-width="1.600"/><path d="M2.500 5V3a2 2 0 0 1 4 0v2" fill="none" stroke="#4d8fb8" stroke-width="1.400"/></svg>
<svg style="left:7.9px;top:3.6px" width="8" height="8" viewBox="0 0 16 16"><rect x="2" y="2" width="12" height="10" fill="#f4f6fd" stroke="#555" stroke-width="1.500"/><path d="M2 5h12" stroke="#555" stroke-width="1.500"/><path d="M6 9l5-1v7l-5-1z" fill="#7b4fc0"/></svg>
<span class="t" style="left:19.2px;top:4.4px">Solution 'ContosoApiApp' (1 of 1 project)</span>
<svg style="left:17.5px;top:14.4px" width="7.5" height="7.5" viewBox="0 0 16 16"><circle cx="8" cy="8" r="7" fill="#1e1e1e"/><path d="M5.500 13c0-3-2-3-1-5.500 0-2 7-2 7 0 1 2.500-1 2.500-1 5.500z" fill="#fff"/></svg>
<span class="t" style="left:29.0px;top:14.9px">GitHub Actions</span>
<svg style="left:4.6px;top:26.1px" width="5" height="5" viewBox="0 0 10 10"><path d="M9 1v8H1z" fill="#2a2a2a"/></svg>
<svg style="left:11.3px;top:25.6px" width="4" height="5.400" viewBox="0 0 9 12"><rect x="1" y="5" width="7" height="6" fill="#e4eef6" stroke="#4d8fb8" stroke-width="1.600"/><path d="M2.500 5V3a2 2 0 0 1 4 0v2" fill="none" stroke="#4d8fb8" stroke-width="1.400"/></svg>
<svg style="left:17.6px;top:24.6px" width="8" height="8" viewBox="0 0 16 16"><rect x="4" y="2" width="11" height="9" fill="#f4f6fd" stroke="#444" stroke-width="1.500"/><path d="M4 5h11" stroke="#444" stroke-width="1.500"/><circle cx="5" cy="11" r="4.200" fill="#3d5fb5"/></svg>
<span class="t" style="left:29.0px;top:25.4px;font-weight:bold;letter-spacing:-0.2px">ContosoApiApp</span>
<svg style="left:15.5px;top:36.5px" width="5" height="5" viewBox="0 0 10 10"><path d="M9 1v8H1z" fill="#2a2a2a"/></svg>
<svg style="left:27.7px;top:35.0px" width="8" height="8" viewBox="0 0 16 16"><path d="M4 10.500a3.500 3.500 0 1 1 8 0h1a2 2 0 0 1 0 4H4a2.500 2.500 0 0 1 0-4z" fill="#e8eefb" stroke="#4a78c8" stroke-width="1.400"/><path d="M8 5V1M6 3l2-2 2 2" fill="none" stroke="#4a78c8" stroke-width="1.300"/></svg>
<span class="t" style="left:39.4px;top:35.8px">Connected Services</span>
<svg style="left:37.6px;top:45.5px" width="8" height="8" viewBox="0 0 16 16"><path d="M3 1.500h7l3 3v10H3z" fill="#fff" stroke="#555" stroke-width="1.300"/></svg>
<span class="t" style="left:49.6px;top:46.3px">No service dependencies discovered</span>
<svg style="left:15.0px;top:57.0px" width="4" height="6" viewBox="0 0 8 12"><path d="M1 1l6 5-6 5z" fill="#fff" stroke="#2a2a2a" stroke-width="1.400"/></svg>
<svg style="left:27.0px;top:56.0px" width="8" height="8" viewBox="0 0 16 16"><rect x="1" y="4" width="6" height="6" fill="none" stroke="#333" stroke-width="1.500"/><rect x="9" y="2" width="6" height="6" fill="none" stroke="#333" stroke-width="1.500"/><path d="M4 12c3 3 7 1 8-2" fill="none" stroke="#333" stroke-width="1.300"/></svg>
<span class="t" style="left:39.4px;top:56.8px">Dependencies</span>
<svg style="left:15.0px;top:67.5px" width="4" height="6" viewBox="0 0 8 12"><path d="M1 1l6 5-6 5z" fill="#fff" stroke="#2a2a2a" stroke-width="1.400"/></svg>
<svg style="left:22.0px;top:67.5px" width="4" height="5.400" viewBox="0 0 9 12"><rect x="1" y="5" width="7" height="6" fill="#e4eef6" stroke="#4d8fb8" stroke-width="1.600"/><path d="M2.500 5V3a2 2 0 0 1 4 0v2" fill="none" stroke="#4d8fb8" stroke-width="1.400"/></svg>
<svg style="left:27.2px;top:66.5px" width="8" height="8" viewBox="0 0 16 16"><path d="M1 4h6l1 2h7v8H1z" fill="#d8a83c"/><path d="M3 12l7-7 2 2-7 7z" fill="#333"/></svg>
<span class="t" style="left:39.4px;top:67.3px">Properties</span>
<svg style="left:15.5px;top:78.4px" width="5" height="5" viewBox="0 0 10 10"><path d="M9 1v8H1z" fill="#2a2a2a"/></svg>
<svg style="left:22.0px;top:77.9px" width="4" height="5.400" viewBox="0 0 9 12"><rect x="1" y="5" width="7" height="6" fill="#e4eef6" stroke="#4d8fb8" stroke-width="1.600"/><path d="M2.500 5V3a2 2 0 0 1 4 0v2" fill="none" stroke="#4d8fb8" stroke-width="1.400"/></svg>
<svg style="left:27.2px;top:76.9px" width="8" height="8" viewBox="0 0 16 16"><path d="M1 3h6l1 2h7v9H1z" fill="#d8a83c"/><rect x="4" y="7" width="8" height="5" fill="#b5541c"/></svg>
<span class="t" style="left:39.4px;top:77.7px">Controllers</span>
<svg style="left:24.9px;top:88.7px" width="4" height="6" viewBox="0 0 8 12"><path d="M1 1l6 5-6 5z" fill="#fff" stroke="#2a2a2a" stroke-width="1.400"/></svg>
<svg style="left:31.7px;top:88.7px" width="4" height="5.400" viewBox="0 0 9 12"><rect x="1" y="5" width="7" height="6" fill="#e4eef6" stroke="#4d8fb8" stroke-width="1.600"/><path d="M2.500 5V3a2 2 0 0 1 4 0v2" fill="none" stroke="#4d8fb8" stroke-width="1.400"/></svg>
<svg style="left:37.3px;top:87.7px" width="8" height="8" viewBox="0 0 16 16"><path d="M7 5a4 4 0 1 0 0 6" fill="none" stroke="#444" stroke-width="1.800"/><path d="M10 5v6M13 5v6M9 7h5M9 9h5" stroke="#444" stroke-width="1"/></svg>
<span class="t" style="left:49.6px;top:88.5px">OrderController.cs</span>
<svg style="left:15.0px;top:99.2px" width="4" height="6" viewBox="0 0 8 12"><path d="M1 1l6 5-6 5z" fill="#fff" stroke="#2a2a2a" stroke-width="1.400"/></svg>
<svg style="left:22.0px;top:99.2px" width="4" height="5.400" viewBox="0 0 9 12"><rect x="1" y="5" width="7" height="6" fill="#e4eef6" stroke="#4d8fb8" stroke-width="1.600"/><path d="M2.500 5V3a2 2 0 0 1 4 0v2" fill="none" stroke="#4d8fb8" stroke-width="1.400"/></svg>
<svg style="left:27.2px;top:98.2px" width="8" height="8" viewBox="0 0 16 16"><path d="M3 1.500h7l3 3v10H3z" fill="#fff" stroke="#555" stroke-width="1.300"/><path d="M7 6c-1.500 0-1 2-2 2.500 1 .5.500 2.500 2 2.500M9 6c1.500 0 1 2 2 2.500-1 .5-.5 2.500-2 2.500" fill="none" stroke="#333" stroke-width="1"/></svg>
<span class="t" style="left:39.4px;top:99.0px">appsettings.json</span>
<svg style="left:15.0px;top:109.7px" width="4" height="6" viewBox="0 0 8 12"><path d="M1 1l6 5-6 5z" fill="#fff" stroke="#2a2a2a" stroke-width="1.400"/></svg>
<svg style="left:22.0px;top:109.7px" width="4" height="5.400" viewBox="0 0 9 12"><rect x="1" y="5" width="7" height="6" fill="#e4eef6" stroke="#4d8fb8" stroke-width="1.600"/><path d="M2.500 5V3a2 2 0 0 1 4 0v2" fill="none" stroke="#4d8fb8" stroke-width="1.400"/></svg>
<svg style="left:27.5px;top:108.7px" width="8" height="8" viewBox="0 0 16 16"><path d="M7 5a4 4 0 1 0 0 6" fill="none" stroke="#444" stroke-width="1.800"/><path d="M10 5v6M13 5v6M9 7h5M9 9h5" stroke="#444" stroke-width="1"/></svg>
<span class="t" style="left:39.4px;top:109.5px">Order.cs</span>
<svg style="left:15.0px;top:120.1px" width="4" height="6" viewBox="0 0 8 12"><path d="M1 1l6 5-6 5z" fill="#fff" stroke="#2a2a2a" stroke-width="1.400"/></svg>
<svg style="left:22.0px;top:120.1px" width="4" height="5.400" viewBox="0 0 9 12"><rect x="1" y="5" width="7" height="6" fill="#e4eef6" stroke="#4d8fb8" stroke-width="1.600"/><path d="M2.500 5V3a2 2 0 0 1 4 0v2" fill="none" stroke="#4d8fb8" stroke-width="1.400"/></svg>
<svg style="left:27.5px;top:119.1px" width="8" height="8" viewBox="0 0 16 16"><path d="M7 5a4 4 0 1 0 0 6" fill="none" stroke="#444" stroke-width="1.800"/><path d="M10 5v6M13 5v6M9 7h5M9 9h5" stroke="#444" stroke-width="1"/></svg>
<span class="t" style="left:39.4px;top:119.9px">Program.cs</span>
</div>
<div style="left:901.0px;top:379.8px;width:145px;height:9px;background:#e8e9ef"></div>
<div style="left:909.0px;top:381.6px;width:119px;height:5.4px;background:#c6c8d0"></div>
<i style="left:904.0px;top:382.0px;width:0;height:0;border-top:2.300px solid transparent;border-bottom:2.300px solid transparent;border-right:2.800px solid #7d8088"></i>
<i style="left:1039.0px;top:382.0px;width:0;height:0;border-top:2.300px solid transparent;border-bottom:2.300px solid transparent;border-left:2.800px solid #555"></i>
<div style="left:901.0px;top:393.6px;width:145px;height:11.2px;background:#40508d"></div>
<span class="wt" style="left:902.8px;top:396.2px;color:#fff">Dev Tunnels</span>
<i class="car" style="left:1019.7px;top:399.0px;border-top-color:#b9c3e5"></i>
<i style="left:1028.4px;top:400.0px;width:4px;height:0.8px;background:#b4bfe2"></i><i style="left:1029.7px;top:397.0px;width:1.2px;height:5px;background:#b4bfe2"></i>
<svg style="left:1036.8px;top:397.0px" width="6" height="6" viewBox="0 0 6 6"><path d="M0.500 0.500 5.500 5.500M5.500 0.500 0.500 5.500" stroke="#cdd5ef" stroke-width="0.75"/></svg>
<div style="left:901.0px;top:405.0px;width:145px;height:14px;background:#ccd5f0"></div>
<svg style="left:904.3px;top:408.3px" width="8.500" height="8.500" viewBox="0 0 18 18"><path d="M9 2.500A6.500 6.500 0 1 0 15.500 9M9 2.500H5M9 2.500 7 0" fill="none" stroke="#3d4566" stroke-width="1.600"/></svg>
<i style="left:916.5px;top:412.2px;width:8px;height:1px;background:#3d4566"></i><i style="left:920.0px;top:408.6px;width:1px;height:8px;background:#3d4566"></i>
<svg style="left:928.5px;top:408.3px" width="8" height="8.500" viewBox="0 0 16 17"><rect x="2" y="1.500" width="12" height="14" rx="1" fill="none" stroke="#3d4566" stroke-width="1.700"/><path d="M2 5.500h12" stroke="#3d4566" stroke-width="1.700"/></svg>
<svg style="left:942.0px;top:408.3px" width="8" height="8.500" viewBox="0 0 16 17"><circle cx="8" cy="6" r="3" fill="none" stroke="#2a2a2a" stroke-width="1.700"/><path d="M2.500 15c0-5 11-5 11 0" fill="none" stroke="#2a2a2a" stroke-width="1.700"/></svg>
<div style="left:901.0px;top:419.0px;width:145px;height:134px;background:#fff"></div>
<span class="dt" style="left:904.6px;top:476.5px">No tunnels have been created, click +</span>
<span class="dt" style="left:904.6px;top:487.0px">to create a tunnel</span>
<span class="nt" style="left:1057.3px;top:40.0px">Notifications</span>
<div style="left:1060.2px;top:39.7px;width:3px;height:37px;background:#44538a"></div>
<div id="st"></div>
<svg style="left:3px;top:559.5px" width="9" height="9" viewBox="0 0 18 18"><path d="M2 2h14v10H9l-4 4v-4H2z" fill="none" stroke="#dfe4f5" stroke-width="1.5"/><path d="M5.5 7l2.5 2.500 4.500-4.500" fill="none" stroke="#dfe4f5" stroke-width="1.5"/></svg>
<span class="wt" style="left:16.2px;top:561.3px">Ready</span>
<svg style="left:829px;top:560.5px" width="7" height="8" viewBox="0 0 14 16"><path d="M4 15V2M1 5l3-3 3 3M10 1v13M7 11l3 3 3-3" fill="none" stroke="#dfe4f5" stroke-width="1.4"/></svg>
<span class="wt" style="left:839.5px;top:561.3px">0 / 0</span><i class="cau" style="left:857.5px;top:563.5px"></i>
<svg style="left:874px;top:560.5px" width="8" height="8" viewBox="0 0 16 16"><path d="M2 14l1-4 8-8 3 3-8 8z" fill="none" stroke="#dfe4f5" stroke-width="1.5"/></svg>
<span class="wt" style="left:885.5px;top:561.3px">0</span>
<svg style="left:901px;top:560px" width="8" height="9" viewBox="0 0 16 18"><circle cx="4" cy="3.500" r="2.200" fill="none" stroke="#e6eaf8" stroke-width="1.5"/><circle cx="4" cy="14.500" r="2.200" fill="none" stroke="#e6eaf8" stroke-width="1.5"/><circle cx="12" cy="8" r="2.200" fill="none" stroke="#e6eaf8" stroke-width="1.5"/><path d="M4 6v6M4 11c0-3 8-1 8-3" fill="none" stroke="#e6eaf8" stroke-width="1.5"/></svg>
<span class="wt" style="left:913.8px;top:561.3px">master</span><i class="cau" style="left:936.5px;top:563.5px"></i>
<svg style="left:956.5px;top:560px" width="9" height="9" viewBox="0 0 18 18"><rect x="2" y="2" width="13" height="11" fill="none" stroke="#e6eaf8" stroke-width="1.5"/><path d="M2 5.500h13M5 9h6" stroke="#e6eaf8" stroke-width="1.4"/><circle cx="13" cy="13" r="3.500" fill="#40508d" stroke="#e6eaf8" stroke-width="1.4"/></svg>
<span class="wt" style="left:968.3px;top:561.3px">BRK406_DemoSource</span><i class="cau" style="left:1034.5px;top:563.5px"></i>
<svg style="left:1050px;top:560px" width="8" height="9" viewBox="0 0 16 18"><path d="M3 13V8a5 5 0 0 1 10 0v5l1.500 1.500h-13zM6.500 16.500h3" fill="none" stroke="#e6eaf8" stroke-width="1.5"/></svg>
<div id="tb"></div>
<div style="left:416px;top:578.5px;width:6.2px;height:6.200px;background:#3f93a8"></div><div style="left:422.7px;top:578.5px;width:6.2px;height:6.200px;background:#2f7dbd"></div><div style="left:416px;top:585.2px;width:6.2px;height:6.200px;background:#2f6fb8"></div><div style="left:422.7px;top:585.2px;width:6.2px;height:6.200px;background:#3357b5"></div>
<svg style="left:440px;top:577.5px" width="14" height="14" viewBox="0 0 28 28"><circle cx="12" cy="12" r="8.500" fill="none" stroke="#1e2228" stroke-width="2.600"/><path d="M18.500 18.500 26 26" stroke="#1e2228" stroke-width="3"/></svg>
<div style="left:467.5px;top:579px;width:9px;height:9px;background:#d5d8dd"></div><div style="left:464.5px;top:582px;width:9px;height:9px;background:#22252c"></div>
<svg style="left:488.5px;top:578px" width="14" height="13" viewBox="0 0 28 26"><path d="M1 4h9l3 3h14v17H1z" fill="#d8a83c"/><path d="M1 10h26v14H1z" fill="#ecc25a"/><rect x="6" y="17" width="16" height="7" rx="2" fill="#3f6fc0"/></svg>
<svg style="left:513px;top:578px" width="14" height="13" viewBox="0 0 28 26"><rect x="8" y="2" width="19" height="20" rx="2" fill="#2f86c8"/><path d="M8 12 27 22H8z" fill="#1f5fa3"/><rect x="1" y="7" width="14" height="14" rx="2" fill="#1f66b0"/><circle cx="8" cy="14" r="3.600" fill="none" stroke="#dbe8f6" stroke-width="2"/></svg>
<svg style="left:537.5px;top:578px" width="14" height="13" viewBox="0 0 28 26"><circle cx="21" cy="6" r="3.500" fill="#4a5ab8"/><circle cx="13" cy="5" r="4" fill="#4a5ab8"/><rect x="8" y="9" width="18" height="13" rx="3" fill="#5a68c4"/><rect x="1" y="8" width="14" height="14" rx="2" fill="#3a48a4"/><path d="M4.500 11.500h7M8 11.500v8" stroke="#e4e6f6" stroke-width="2"/></svg>
<svg style="left:562px;top:577.5px" width="14" height="14" viewBox="0 0 28 28"><circle cx="14" cy="14" r="12.500" fill="#2f8fbf"/><path d="M3 18a11 11 0 0 1 22-6c0 5-7 5-8 2-5 0-6 8 2 10A12 12 0 0 1 3 18z" fill="#1f62a6"/><circle cx="8" cy="19" r="6" fill="#56483f"/><circle cx="8" cy="17" r="2.600" fill="#d6b8a0"/></svg>
<div style="left:583.5px;top:573.5px;width:20px;height:22px;background:#f4f8fd;border-radius:2px"></div>
<svg style="left:586.8px;top:578px" width="13.500" height="13" viewBox="0 0 25 24"><path d="M4 8.500 16 17.500M4 15.500 16 6.500" fill="none" stroke="#5468d0" stroke-width="4.600" stroke-linecap="round"/><path d="M19 4.500v15" stroke="#4350b8" stroke-width="5" stroke-linecap="round"/><path d="M16 6.500 19 4.500M16 17.500l3 2" stroke="#5468d0" stroke-width="4" stroke-linecap="round"/></svg>
<i style="left:590px;top:593.5px;width:7.500px;height:1.600px;background:#3b6fd0;border-radius:1px"></i>
<svg style="left:610.5px;top:577.5px" width="14" height="14" viewBox="0 0 28 28"><circle cx="15" cy="14" r="12" fill="#c8553a"/><path d="M15 2a12 12 0 0 1 12 12H15z" fill="#e08a6a"/><rect x="1" y="7" width="14" height="14" rx="2" fill="#b03c28"/><path d="M6 18v-8h3.500a2.500 2.500 0 0 1 0 5H6" fill="none" stroke="#f4dcd4" stroke-width="2"/></svg>
<svg style="left:635px;top:577.5px" width="14" height="14" viewBox="0 0 28 28"><circle cx="14" cy="14" r="12" fill="#cdd9ee" stroke="#4a78c8" stroke-width="2"/><path d="M14 5v18M6.200 9.500l15.600 9M6.200 18.500l15.600-9" stroke="#4a78c8" stroke-width="2"/><circle cx="14" cy="14" r="3" fill="#cdd9ee" stroke="#4a78c8" stroke-width="1.600"/></svg>
<i style="left:568px;top:594.5px;width:3px;height:1px;background:#6a7078"></i><i style="left:616px;top:594.5px;width:3px;height:1px;background:#6a7078"></i><i style="left:640.500px;top:594.5px;width:3px;height:1px;background:#6a7078"></i>
<span class="clk" style="top:577.3px">11:35</span>
<span class="clk" style="top:586px">13/05/2024</span>
<div id="shade"></div>
</div>
</body>
</html>
